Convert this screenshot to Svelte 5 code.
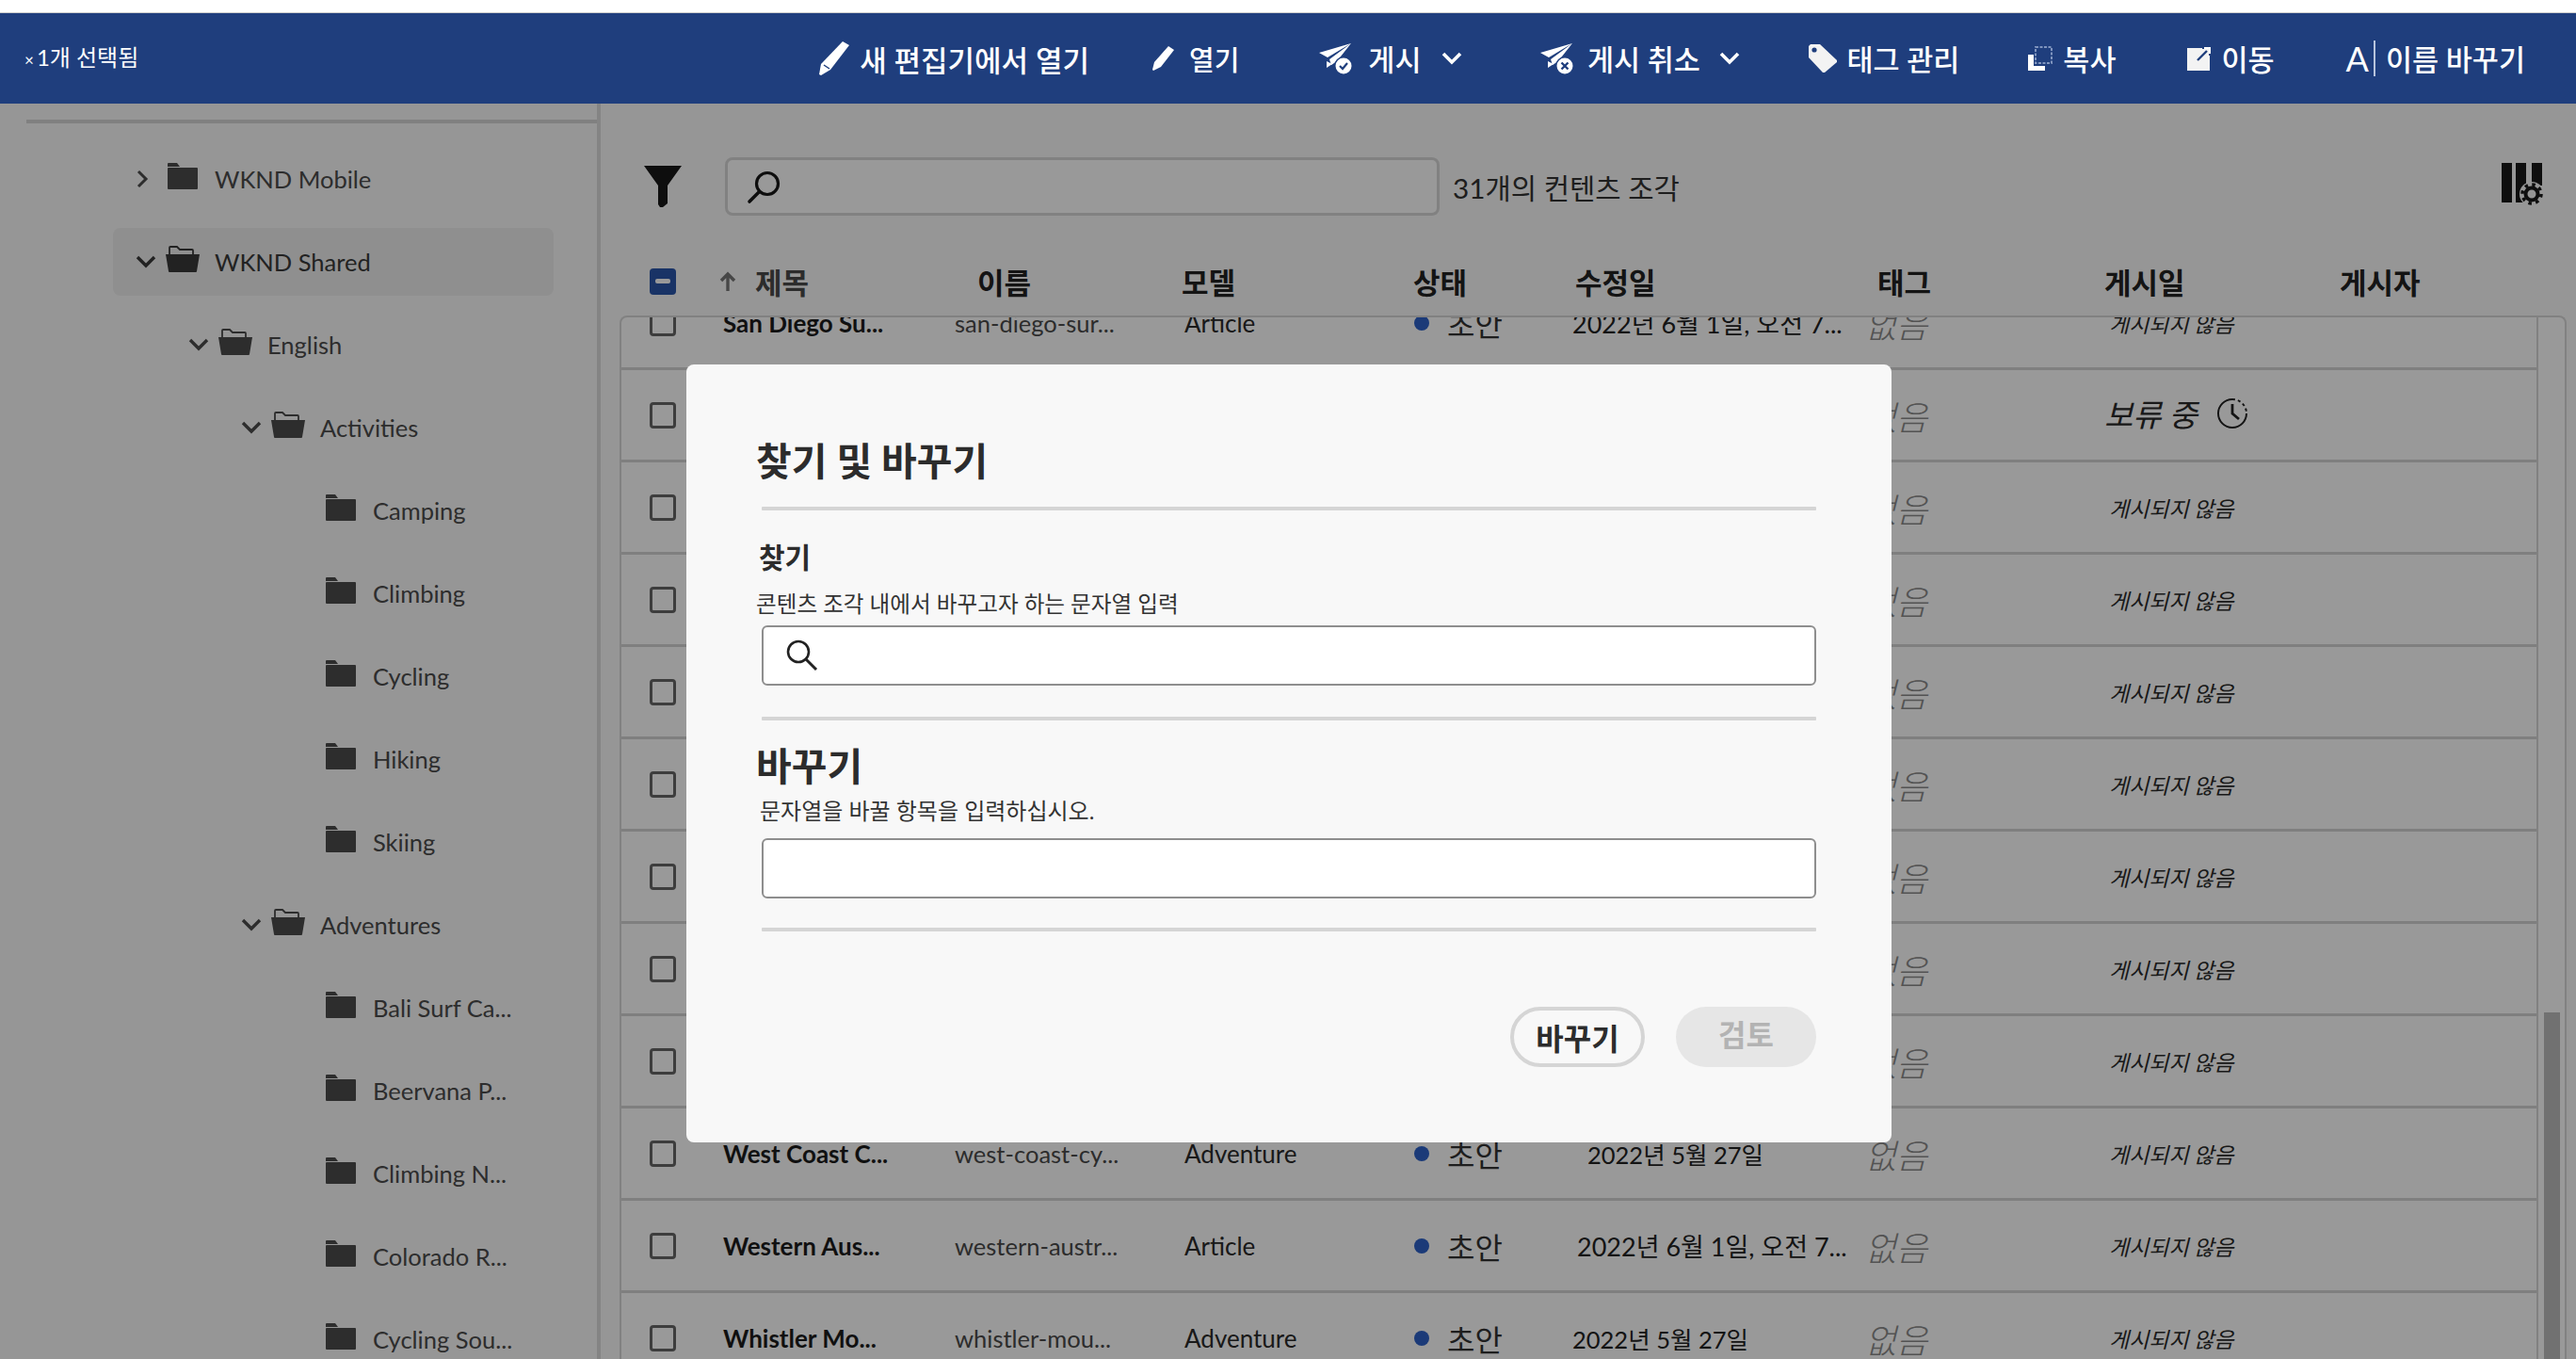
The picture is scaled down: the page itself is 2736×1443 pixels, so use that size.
<script>
  const tree = [
    { label: 'WKND Mobile', level: 0, state: 'closed' },
    { label: 'WKND Shared', level: 0, state: 'open', selected: true },
    { label: 'English', level: 1, state: 'open' },
    { label: 'Activities', level: 2, state: 'open' },
    { label: 'Camping', level: 3 },
    { label: 'Climbing', level: 3 },
    { label: 'Cycling', level: 3 },
    { label: 'Hiking', level: 3 },
    { label: 'Skiing', level: 3 },
    { label: 'Adventures', level: 2, state: 'open' },
    { label: 'Bali Surf Ca...', level: 3 },
    { label: 'Beervana P...', level: 3 },
    { label: 'Climbing N...', level: 3 },
    { label: 'Colorado R...', level: 3 },
    { label: 'Cycling Sou...', level: 3 }
  ];
  const longDate = '2022년 6월 1일, 오전 7...';
  const shortDate = '2022년 5월 27일';
  const rows = [
    { title: 'San Diego Su...', name: 'san-diego-sur...', model: 'Article', date: longDate },
    { pending: true }, {}, {}, {}, {}, {}, {}, {},
    { title: 'West Coast C...', name: 'west-coast-cy...', model: 'Adventure', date: shortDate, shift: 'short d14' },
    { title: 'Western Aus...', name: 'western-austr...', model: 'Article', date: longDate, shift: 'd5' },
    { title: 'Whistler Mo...', name: 'whistler-mou...', model: 'Adventure', date: shortDate, shift: 'short' }
  ];
</script>

<div class="page">
  <div class="strip"></div>
  <header class="bar">
    <div class="count"><span class="x">×</span>1개 선택됨</div>
    <nav class="actions">
      <span class="act a1">
        <svg width="36" height="38" viewBox="0 0 36 38"><path d="M27 1l7 4-20 26-10 6-2-1 2-11z" fill="#fff"/><path d="M7 26l6 4" stroke="#1f3e7d" stroke-width="1.5"/></svg>
        새 편집기에서 열기
      </span>
      <span class="act a2">
        <svg width="26" height="28" viewBox="0 0 26 28"><path d="M18 1l6 4-14 18-8 4-1-1 2-8z" fill="#fff"/></svg>
        열기
      </span>
      <span class="act a3">
        <svg width="36" height="36" viewBox="0 0 36 36"><path d="M35 2L1 12l9 5zM35 2L12 19l2 6 6-4z" fill="#fff"/><path d="M9 21l6 3-6 4z" fill="#fff"/><circle cx="27" cy="26" r="10" fill="#1f3e7d"/><circle cx="27" cy="26" r="8.500" fill="#fff"/><path d="M23 26l3 3 5-6" stroke="#1f3e7d" stroke-width="2.200" fill="none"/></svg>
        게시
        <svg class="chev" width="24" height="16" viewBox="0 0 24 16"><path d="M3 3l9 9 9-9" stroke="#fff" stroke-width="3.600" fill="none"/></svg>
      </span>
      <span class="act a4">
        <svg width="36" height="36" viewBox="0 0 36 36"><path d="M35 2L1 12l9 5zM35 2L12 19l2 6 6-4z" fill="#fff"/><path d="M9 21l6 3-6 4z" fill="#fff"/><circle cx="27" cy="26" r="10" fill="#1f3e7d"/><circle cx="27" cy="26" r="8.500" fill="#fff"/><path d="M23.500 22.500l7 7M30.500 22.500l-7 7" stroke="#1f3e7d" stroke-width="2.400"/></svg>
        게시 취소
        <svg class="chev" width="24" height="16" viewBox="0 0 24 16"><path d="M3 3l9 9 9-9" stroke="#fff" stroke-width="3.600" fill="none"/></svg>
      </span>
      <span class="act a5">
        <svg width="32" height="32" viewBox="0 0 32 32"><path d="M1 3l2-2h10l18 17v2L18 31h-2L1 15z" fill="#f3f3f3"/><circle cx="7" cy="7" r="2.600" fill="#1f3e7d"/></svg>
        태그 관리
      </span>
      <span class="act a6">
        <svg width="26" height="26" viewBox="0 0 26 26"><rect x="8" y="1" width="17" height="17" fill="none" stroke="#7f94be" stroke-width="2" stroke-dasharray="3 1.500"/><path d="M0 9h6v12h12v5H0z" fill="#fff"/></svg>
        복사
      </span>
      <span class="act a7">
        <svg width="26" height="26" viewBox="0 0 26 26"><path d="M0 2h24v24H0z" fill="#f3f3f3"/><path d="M16 0h10v10h-3V3h-7z" fill="#1f3e7d"/><path d="M11 15l10-10" stroke="#1f3e7d" stroke-width="2.400"/><path d="M18 2h6v6" stroke="#fff" stroke-width="2" fill="none"/></svg>
        이동
      </span>
      <span class="act a8">
        <span class="abar">A</span>이름 바꾸기
      </span>
    </nav>
  </header>

  <div class="body">
    <aside class="side">
      <div class="tree">
        {#each tree as t}
          <div class="tnode" class:sel={t.selected} style="--lvl:{t.level}">
            <span class="tchev">
              {#if t.state === 'closed'}
                <svg width="14" height="20" viewBox="0 0 14 20"><path d="M3 2l8 8-8 8" stroke="currentColor" stroke-width="3" fill="none"/></svg>
              {:else if t.state === 'open'}
                <svg width="22" height="14" viewBox="0 0 22 14"><path d="M2 2l9 9 9-9" stroke="currentColor" stroke-width="3.400" fill="none"/></svg>
              {/if}
            </span>
            {#if t.state === 'open'}
              <svg class="folder open" width="36" height="28" viewBox="0 0 36 28"><path d="M4 10V2q0-1 1-1h7l3 3h13q1 0 1 1v5" fill="none" stroke="currentColor" stroke-width="1.800"/><path d="M0 9h36l-3 18q0 1-1 1H4q-1 0-1-1z" fill="currentColor"/></svg>
            {:else}
              <svg class="folder" width="36" height="28" viewBox="0 0 36 28"><path d="M0 4V1q0-1 1-1h9l3 4z" fill="currentColor"/><rect y="5" width="32" height="23" rx="1" fill="currentColor"/></svg>
            {/if}
            <span class="tlabel">{t.label}</span>
          </div>
        {/each}
      </div>
    </aside>

    <main class="content">
      <div class="tools">
        <svg class="filter" width="40" height="44" viewBox="0 0 40 44"><path d="M0 0h40L25 21v19l-5 4h-3l-2-3V21z" fill="#181818"/></svg>
        <div class="searchbox">
          <svg class="sglass" width="36" height="40" viewBox="0 0 36 40"><circle cx="22" cy="15" r="11.500" fill="none" stroke="#181818" stroke-width="3.200"/><path d="M13 24L3 34" stroke="#181818" stroke-width="3.600" stroke-linecap="round"/></svg>
        </div>
        <span class="total">31개의 컨텐츠 조각</span>
        <svg class="colset" width="46" height="46" viewBox="0 0 46 46"><rect x="0" y="0" width="11" height="42" fill="#181818"/><rect x="15" y="0" width="11" height="42" fill="#181818"/><rect x="32" y="0" width="11" height="24" fill="#181818"/><circle cx="32" cy="33" r="13" fill="#fafafa"/><circle cx="32" cy="33" r="6.500" fill="none" stroke="#181818" stroke-width="4"/><circle cx="32" cy="33" r="10" fill="none" stroke="#181818" stroke-width="3.500" stroke-dasharray="3.500 4.350"/></svg>
      </div>

      <div class="head">
        <span class="hcheck"><i></i></span>
        <span class="h-title"><svg width="18" height="22" viewBox="0 0 18 22"><path d="M9 21V3M2 10l7-7 7 7" stroke="#777" stroke-width="3.400" fill="none"/></svg><b>제목</b></span>
        <b>이름</b>
        <b>모델</b>
        <b>상태</b>
        <b>수정일</b>
        <b>태그</b>
        <b>게시일</b>
        <b>게시자</b>
      </div>

      <div class="table">
        <div class="rows">
          {#each rows as r}
            <div class="row">
              <span class="cell-check"><i class="box"></i></span>
              <span class="r-title">{r.title ?? ''}</span>
              <span class="r-name">{r.name ?? ''}</span>
              <span class="r-model">{r.model ?? ''}</span>
              <span class="r-status"><i class="dot"></i>초안</span>
              <span class="r-date {r.shift ?? ''}">{r.date ?? ''}</span>
              <span class="r-tag">없음</span>
              {#if r.pending}
                <span class="r-pending">보류 중
                  <svg width="34" height="34" viewBox="0 0 34 34"><path d="M17 2a15 15 0 1 0 15 15" fill="none" stroke="#222" stroke-width="2"/><path d="M17 2a15 15 0 0 1 15 15" fill="none" stroke="#222" stroke-width="2" stroke-dasharray="3 3"/><path d="M17 7v10l7 6" fill="none" stroke="#222" stroke-width="2.800"/></svg>
                </span>
              {:else}
                <span class="r-pub">게시되지 않음</span>
              {/if}
            </div>
          {/each}
        </div>
        <div class="track"><div class="thumb"></div></div>
      </div>
    </main>

    <div class="overlay">
      <section class="modal">
        <h2>찾기 및 바꾸기</h2>
        <hr class="first" />
        <h3>찾기</h3>
        <p class="p-find">콘텐츠 조각 내에서 바꾸고자 하는 문자열 입력</p>
        <div class="input">
          <svg width="36" height="36" viewBox="0 0 36 36"><circle cx="14" cy="14" r="11" fill="none" stroke="#222" stroke-width="2.600"/><path d="M22 22l11 11" stroke="#222" stroke-width="3"/></svg>
        </div>
        <hr />
        <h2 class="h-rep">바꾸기</h2>
        <p class="p-rep">문자열을 바꿀 항목을 입력하십시오.</p>
        <div class="input i-rep"></div>
        <hr class="last" />
        <div class="btns">
          <button class="ghost">바꾸기</button>
          <button class="off">검토</button>
        </div>
      </section>
    </div>
  </div>
</div>

<style>
  :global(body) { margin: 0; background: #fff; }
  .page {
    width: 2736px; height: 1443px; overflow: hidden; display: flex; flex-direction: column;
    font-family: Lato, "Noto Sans CJK KR", sans-serif; color: #222;
  }
  .strip { height: 13px; background: #fff; border-bottom: 1px solid #ccc; flex: none; }
  .bar {
    height: 96px; flex: none; background: #1f3e7d; color: #fff; display: flex; align-items: center;
    padding: 0 54px 0 26px; justify-content: space-between;
  }
  .count { font-size: 24px; margin-top: -6px; }
  .x { font-size: 17px; margin-right: 3px; }
  .actions { display: flex; align-items: center; font-size: 30.500px; font-weight: 500; }
  .act { display: flex; align-items: center; gap: 9px; white-space: nowrap; margin-left: 76px; }
  .a1 { font-size: 31px; }
  .a2 { margin-left: 66px; gap: 14px; font-size: 29px; }
  .a3 { margin-left: 84px; gap: 17px; }
  .a4 { margin-left: 81px; gap: 14.500px; }
  .a5 { margin-left: 71px; gap: 9px; }
  .a6 { margin-left: 73px; gap: 11px; }
  .a7 { gap: 10px; }
  .a3 .chev { margin-left: 4px; }
  .a4 .chev { margin-left: 5px; }
  .abar { font-size: 36px; font-weight: 400; padding-right: 5px; border-right: 2px solid #b8c4dc; line-height: 38px; margin-right: 2px; }

  .body { flex: 1; display: flex; position: relative; min-height: 0; background: #fff; }
  .side { width: 606px; flex: none; border-right: 4px solid #dcdcdc; background: #fafafa; padding: 17px 0 0 28px; }
  .tree { border-top: 4px solid #d6d6d6; padding-top: 23px; display: flex; flex-direction: column; gap: 16px; }
  .tnode {
    height: 72px; flex: none; margin-left: 92px; width: 468px; padding-left: calc(var(--lvl) * 56px);
    box-sizing: border-box; display: flex; align-items: center; border-radius: 8px; color: #4b4b4b; font-size: 25.500px;
  }
  .tnode.sel { background: #eeeeee; color: #3a3a3a; }
  .tchev { width: 58px; flex: none; padding-left: 24px; box-sizing: border-box; display: flex; align-items: center; }
  .tchev svg { flex: none; }
  .folder { flex: none; margin-right: 14px; margin-top: -6px; }
  .folder.open { margin-left: -2px; margin-right: 16px; }

  .content { flex: 1; min-width: 0; padding-left: 20px; background: #fafafa; display: flex; flex-direction: column; }
  .tools { height: 100px; padding-top: 38px; flex: none; display: flex; align-items: center; padding-left: 26px; }
  .filter { flex: none; }
  .searchbox {
    width: 759px; height: 62px; box-sizing: border-box; border: 3px solid #d8d8d8; border-radius: 8px;
    margin-left: 46px; display: flex; align-items: center; padding-left: 20px; background: #fff;
  }
  .sglass { margin-top: 4px; }
  .total { font-size: 29.700px; margin-left: 14px; color: #333; }
  .colset { margin-left: auto; margin-right: 33px; margin-top: -4px; }

  .head {
    height: 87px; padding-top: 14px; box-sizing: border-box; display: grid; flex: none; font-size: 31px; color: #222; align-items: center;
    grid-template-columns: 110px 270px 217px 246px 172px 321px 241px 250px 1fr;
  }
  .head b { font-weight: 700; }
  .hcheck { padding-left: 32px; display: flex; }
  .hcheck i { width: 28px; height: 28px; border-radius: 4px; background: #2a55ab; display: flex; align-items: center; justify-content: center; }
  .hcheck i::after { content: ''; width: 16px; height: 5px; border-radius: 2px; background: #fff; }
  .h-title { display: flex; align-items: center; gap: 20px; margin-left: -4px; }
  .h-title b { color: #4a4a4a; }

  .table {
    flex: 1; min-height: 0; margin-right: 10px; border: 2px solid #d8d8d8; border-bottom: 0; border-radius: 8px 8px 0 0;
    display: flex; overflow: hidden; background: #fff;
  }
  .rows { flex: 1; min-width: 0; margin-top: -42px; }
  .row {
    height: 98px; box-sizing: border-box; border-bottom: 3px solid #d4d4d4; display: grid; align-items: center;
    grid-template-columns: 108px 246px 244px 244px 168px 311px 259px 1fr; white-space: nowrap;
  }
  .cell-check { padding-left: 30px; display: flex; }
  .box { width: 22px; height: 22px; border: 3px solid #666; border-radius: 4px; display: block; }
  .r-title { font-weight: 700; color: #1c1c1c; font-size: 26px; }
  .r-name { color: #4a4a4a; font-size: 25.500px; font-weight: 400; }
  .r-model { color: #2a2a2a; font-size: 26px; }
  .r-status { display: flex; align-items: center; gap: 19px; font-size: 32px; color: #333; }
  .dot { width: 16px; height: 16px; border-radius: 50%; background: #2d62c8; display: block; }
  .r-date { font-size: 27px; color: #222; }
  .r-date.short { font-size: 25.500px; }
  .d14 { padding-left: 16px; }
  .d5 { padding-left: 5px; }
  .r-tag { font-size: 36px; font-style: italic; font-weight: 300; color: #8a8a8a; }
  .r-pub { font-size: 23px; font-style: italic; color: #2a2a2a; }
  .r-pending { font-size: 33px; font-style: italic; color: #2a2a2a; display: flex; align-items: center; gap: 20px; margin-left: -5px; margin-top: -3px; }
  .track { width: 30px; flex: none; border-left: 2px solid #d8d8d8; box-sizing: border-box; padding-left: 6px; }
  .thumb { width: 17px; height: 400px; margin-top: 738px; background: #bcbcbc; }

  .overlay {
    position: absolute; inset: 0; background: rgba(0, 0, 0, .4); display: flex; justify-content: center; align-items: flex-start;
    padding: 277px 0 0 2px; box-sizing: border-box;
  }
  .modal {
    width: 1280px; height: 826px; box-sizing: border-box; background: #f8f8f8; border-radius: 8px;
    padding: 73px 80px 0 74px; color: #2c2c2c; display: flex; flex-direction: column;
  }
  .modal h2 { margin: 0; font-size: 41px; font-weight: 700; line-height: 60px; }
  .modal hr { border: 0; height: 4px; background: #d5d5d5; margin: 33px 0 0 6px; border-radius: 1px; flex: none; }
  .modal hr.first { margin-top: 18px; }
  .modal hr.last { margin-top: 31px; }
  .modal h3 { margin: 27px 0 0 3px; font-size: 30px; font-weight: 700; line-height: 44px; }
  .modal p { margin: 11px 0 0; font-size: 24px; line-height: 34px; color: #333; }
  .p-find { font-size: 23.600px !important; }
  .input {
    height: 64px; box-sizing: border-box; margin: 6px 0 0 6px; background: #fff; border: 2px solid #8e8e8e; border-radius: 6px;
    display: flex; align-items: center; padding-left: 23px; flex: none;
  }
  .modal .h-rep { margin-top: 19px; }
  .modal .p-rep { margin: 0 0 0 4px; }
  .i-rep { margin-top: 12px; }
  .btns { display: flex; justify-content: flex-end; gap: 33px; margin-top: 80px; }
  .btns button {
    height: 64px; border-radius: 32px; font: 700 32px Lato, "Noto Sans CJK KR", sans-serif; box-sizing: border-box; padding: 0;
  }
  .ghost { width: 143px; background: #f8f8f8; border: 4px solid #d5d5d5; color: #2c2c2c; }
  .btns .off { width: 149px; background: #e6e6e6; border: 0; color: #b3b3b3; padding-bottom: 8px; }
</style>
